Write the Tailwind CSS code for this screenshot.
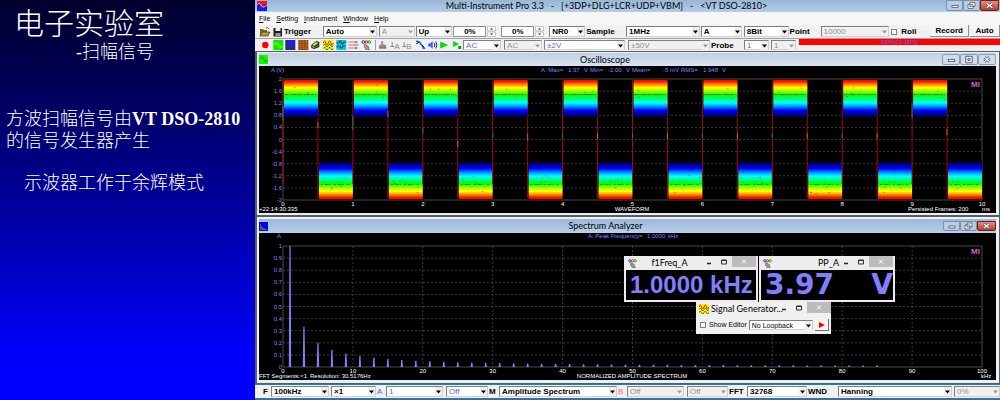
<!DOCTYPE html>
<html lang="zh-CN">
<head>
    <meta charset="UTF-8">
    <meta name="viewport" content="width=device-width, initial-scale=1.0">
    <title>电子实验室 - 扫幅信号</title>
    <script src="https://cdn.jsdelivr.net/npm/@tailwindcss/browser@4"></script>
</head>
<body class="flex min-h-screen overflow-x-hidden bg-[#0000f0] font-['Liberation_Sans',sans-serif] text-black">

    <!-- Slide text -->
    <aside class="w-[255px] shrink-0 bg-linear-to-b from-[#00002c] to-[#0000ff] to-90% font-['Liberation_Serif','Noto_Sans_CJK_SC',serif] text-lg font-light text-white">
        <h1 class="pt-2 pl-3.5 text-[30px] leading-8">电子实验室</h1>
        <p class="pl-[76px] leading-6">-扫幅信号</p>
        <p class="mt-11 pl-1.5 leading-[22px] whitespace-nowrap">方波扫幅信号由<b class="font-bold">VT DSO-2810</b><br>的信号发生器产生</p>
        <p class="mt-5 pl-6 leading-[22px]">示波器工作于余辉模式</p>
    </aside>

    <main class="relative flex min-w-0 flex-1 flex-col bg-[#f0f0f0]">
        <header class="flex h-3 items-center bg-linear-to-b from-[#9ab6d6] to-[#b4cde8]">
            <svg class="ml-0.5 h-2.5 w-2.5" viewBox="0 0 10 10"><path fill="#f01020" d="M0 0h10v10H0z"/><path fill="#1020f0" d="M0 2l2 1 2 3 2 1 2-3 2-1v7H0z"/><path d="M0 4q2-4 4 0t6 0" fill="none" stroke="#fff" stroke-width=".6"/></svg>
            <h2 class="flex-1 text-center font-['Lato',sans-serif] text-[9px] leading-3 whitespace-pre">Multi-Instrument Pro 3.3   -   [+3DP+DLG+LCR+UDP+VBM]   -   &lt;VT DSO-2810&gt;</h2>
            <div class="flex h-full pr-px pb-px" data-window-buttons="active"></div>
        </header>

        <nav class="flex h-[13px] items-center gap-1.5 bg-[#f6f6f6] pl-1 text-[7px] leading-3">
            <a href="#"><u>F</u>ile</a>
            <a href="#"><u>S</u>etting</a>
            <a href="#"><u>I</u>nstrument</a>
            <a href="#"><u>W</u>indow</a>
            <a href="#"><u>H</u>elp</a>
        </nav>

        <div id="triggerBar" class="flex h-[13px] text-[8px] font-bold"></div>
        <div id="inputBar" class="flex h-[13px] border-t border-[#a0a0a0] text-[8px]"></div>

        <div class="flex flex-col gap-0.5 bg-[#5c5c5c] pt-px pr-px pb-px pl-0.5">
            <section class="border-t border-r-3 border-b-2 border-l-2 border-[#e8eef5] bg-black">
                <div class="flex h-[13px] items-center bg-linear-to-b from-[#c2d0e0] to-[#d8e4f0]">
                    <svg class="h-[9px] w-[9px]" viewBox="0 0 9 9"><path fill="#00ff00" d="M0 0h9v9H0z"/><path d="M1 4q2-4 4 .5T8 5" fill="none" stroke="#806000"/></svg>
                    <h3 class="flex-1 text-center font-['Lato',sans-serif] text-[9px] leading-3">Oscilloscope</h3>
                    <div class="flex h-full py-px" data-window-buttons="inactive"></div>
                </div>
                <svg id="scope" class="block h-auto w-full" viewBox="0 0 737 147" font-size="6"></svg>
            </section>

            <section class="border-t-2 border-r-3 border-b-3 border-l-2 border-[#e8f2fa] border-b-[#e0f4f8] bg-black">
                <div class="flex h-[14px] items-center bg-linear-to-b from-[#9cb8d8] to-[#b8d0ea]">
                    <svg class="h-[9px] w-[9px]" viewBox="0 0 9 9"><path fill="#0000ff" d="M0 0h9v9H0z"/><path fill="#556" d="M1 8V2h1v2h1v1h1v1h2v1h2v1z"/></svg>
                    <h3 class="flex-1 text-center font-['Lato',sans-serif] text-[9px] leading-3">Spectrum Analyzer</h3>
                    <div class="flex h-full py-0.5" data-window-buttons="active"></div>
                </div>
                <svg id="spectrum" class="block h-auto w-full" viewBox="0 0 737 147" font-size="6"></svg>
            </section>
        </div>

        <div id="spectrumBar" class="flex h-[14px] border-t border-[#2080a0] text-[8px] font-bold"></div>
        <footer class="min-h-[3px] flex-1 bg-[#3a7098]"></footer>

        <!-- Floating windows -->
        <section class="absolute top-64 left-[369px] w-[134px] bg-[#ececec] px-0.5 pb-0.5">
            <div class="flex h-3.5 items-center pl-0.5">
                <span data-icon="ddp" class="h-[9px] w-[9px]"></span>
                <h4 class="flex-1 text-center font-['Lato',sans-serif] text-[9px] leading-3">f1Freq_A</h4>
                <div class="flex h-full" data-window-buttons="small"></div>
            </div>
            <output class="block bg-black pl-1 text-2xl leading-[30px] font-bold whitespace-nowrap text-[#8080ff]">1.0000 kHz</output>
        </section>
        <section class="absolute top-64 left-[504px] w-[136px] bg-[#ececec] px-0.5 pb-0.5">
            <div class="flex h-3.5 items-center pl-0.5">
                <span data-icon="ddp" class="h-[9px] w-[9px]"></span>
                <h4 class="flex-1 text-right font-['Lato',sans-serif] text-[9px] leading-3">PP_A</h4>
                <div class="flex h-full" data-window-buttons="small"></div>
            </div>
            <output class="flex justify-between bg-black pl-1 font-['DejaVu_Sans',sans-serif] text-[28px] leading-[30px] font-bold text-[#8080ff]"><span>3.97</span> <span>V</span></output>
        </section>
        <section class="absolute top-[302px] left-[441px] w-[135px] bg-[#f0f0f0]">
            <div class="flex h-3.5 items-center pl-[3px]">
                <span data-icon="gen" class="h-2.5 w-2.5 shrink-0"></span>
                <h4 class="min-w-0 flex-1 pl-0.5 font-['Lato',sans-serif] text-[9px] leading-3 whitespace-nowrap">Signal Generator...</h4>
                <div class="flex h-full" data-window-buttons="small"></div>
            </div>
            <div class="flex h-[18px] items-center gap-0.5 pr-0.5 pl-1 text-[7px]">
                <label class="flex items-center gap-[3px] whitespace-nowrap"><input type="checkbox" class="h-1.5 w-1.5 appearance-none border border-[#808080] bg-white"> Show Editor</label>
                <span id="loopback" class="flex h-3 flex-1"></span>
                <button aria-label="Start" class="flex h-3 w-3.5 items-center justify-center border-r border-b border-[#707070] bg-[#f4f4f4]"><svg class="h-1.5 w-1.5" viewBox="0 0 6 6"><path fill="#f00" d="M0 0l6 3-6 3z"/></svg></button>
            </div>
        </section>
    </main>

    <script>
        // Icons on a 10x10 grid
        const icons = {
            open: '<path d="M0 9V2h3l1 1h3v2H3z" fill="#807000"/><path d="M2 5h8L8 9H0z" fill="#b0a030" stroke="#222" stroke-width=".6"/><path d="M6 1q2-1 3 1" fill="none" stroke="#222" stroke-width=".7"/>',
            save: '<path d="M1 1h8.500v8.500H1z" fill="#222"/><path d="M3 1h5v3H3z" fill="#eee"/><path d="M3 6h5v3H3z" fill="#999"/>',
            rec: '<circle cx="5" cy="5" r="3.200" fill="#f00"/>',
            osc: '<path d="M0 0h10v10H0z" fill="#00f000"/><path d="M1 5q2-4 4 0t4 1" fill="none" stroke="#ff0"/>',
            spec: '<path d="M0 0h10v10H0z" fill="#2020e0"/><path d="M1 9V1h1v4h1v1h2v1h2v1h2v1z" fill="#334"/>',
            plot3d: '<path d="M0 0h10v10H0z" fill="#904010"/><path d="M0 2h10M0 5h10M0 8h10M2 0v10M5 0v10M8 0v10" stroke="#d08030" stroke-dasharray="1 1"/>',
            book: '<path d="M1 5l5-4 3 1v5L4 9 1 8z" fill="#222"/><path d="M2 5l4-3 2 1-4 3z" fill="#ee0"/><path d="M2 6l2 1v1L2 7z" fill="#fff"/><path d="M5 7l3-2v1L5 8z" fill="#0c0"/>',
            gen: '<path d="M0 0h10v10H0z" fill="#ff0"/><path d="M0 3q1.300-4 2.500 0t2.500 0 2.500 0 2.500 0" fill="none" stroke="#f00"/><path d="M0 5.500q1.300-3 2.500 0t2.500 0 2.500 0 2.500 0M0 8.500q1.300-3 2.500 0t2.500 0 2.500 0 2.500 0" fill="none" stroke="#060" stroke-width=".8"/>',
            cyan: '<path d="M0 0h10v10H0z" fill="#00d0e8"/><path d="M0 3h3V1h2v3h2V2h3M1 8V6h3v2h2V6h3" fill="none" stroke="#023" stroke-width=".8"/>',
            log: '<path d="M0 2h7M0 5h7M0 8h7" stroke="#f06090" stroke-width="1"/><path d="M7 1l3 1-3 1zM7 7l3 1-3 1z" fill="#e03"/><path d="M6 5h4" stroke="#20b020"/>',
            ddp: '<circle cx="2" cy="2" r="1.300" fill="none" stroke="#22f"/><circle cx="5" cy="2" r="1.300" fill="none" stroke="#f00"/><circle cx="8" cy="2" r="1.300" fill="none" stroke="#0a0"/><path d="M3 4l4 2 1 4H5L3 7z" fill="#999" stroke="#444" stroke-width=".5"/>',
            hand: '<path d="M4 1h2v3l3 1v4H2V5l2-1z" fill="#999"/><path d="M2 7h7" stroke="#666"/>',
            perpA: '<path d="M2 2v4M0 6.500h4" stroke="#888" fill="none"/><text x="4" y="9" font-size="8" fill="#888">A</text>',
            perpB: '<path d="M2 2v4M0 6.500h4" stroke="#888" fill="none"/><text x="4" y="9" font-size="8" fill="#888">B</text>',
            probe: '<path d="M1 1l3 1 4 5v2" fill="none" stroke="#06e" stroke-width="1.500"/><path d="M1 4l3-2M7 5l3 4" stroke="#024"/>',
            speaker: '<path d="M1 3.500h2l2.500-2.500v8L3 6.500H1z" fill="#36f"/><path d="M7 3q1.500 2 0 4M8.500 1.500q2.500 3.500 0 7" fill="none" stroke="#22a"/>',
            play: '<path d="M1 1.500l8 3.500-8 3.500z" fill="#0d0"/>',
            play2: '<path d="M1 1l6 3-6 3z" fill="#0d0"/><path d="M6 6h3v3H6z" fill="#0a0"/>'
        };
        const icon = name => `<svg class="h-full w-full" viewBox="0 0 10 10">${icons[name]}</svg>`;

        // Every item of a bar carries a weight, so the bars stretch with the window
        const combo = (w, name, value, look = '') => `
            <span class="relative my-px flex min-w-0 bg-white" style="flex:${w} 1 0px">
                <select aria-label="${name}" class="w-full min-w-0 appearance-none truncate border border-t-[#808080] border-l-[#808080] border-[#d0d0d0] pl-0.5 leading-[9px] ${look}"><option>${value}</option></select>
                <svg class="pointer-events-none absolute top-px right-px bottom-px w-[7px] bg-[#f0f0f0]" height="9" viewBox="0 0 7 9"><path d="M1 3.500h5L3.500 6.500z" fill="${look.includes('#909090') ? '#999' : '#000'}"/></svg>
            </span>`;
        const gray = 'bg-[#f0f0f0] text-[#909090] font-normal';
        const blue = 'text-[#6060ff] font-normal';
        const gap = w => `<span style="flex:${w} 1 0px"></span>`;
        const label = (w, text, look = 'font-bold') => `<span class="my-px min-w-0 overflow-hidden indent-px leading-[11px] whitespace-nowrap ${look}" style="flex:${w} 1 0px">${text}</span>`;
        const tool = (w, name) => `<button aria-label="${name}" class="flex min-w-0 items-center" style="flex:${w} 1 0px"><svg class="h-2.5 w-full" viewBox="0 0 10 10">${icons[name]}</svg></button>`;
        const button = (w, text) => `<button class="mb-px border-r border-b border-[#909090] bg-[#f4f4f4] leading-[11px]" style="flex:${w} 1 0px">${text}</button>`;
        const percent = (w, name) => `
            <span class="my-px flex min-w-0" style="flex:${w} 1 0px">
                <input aria-label="${name}" value="0%" class="w-full min-w-0 border border-[#909090] bg-white text-center leading-[9px]">
                <svg class="h-full w-2.5 shrink-0 pl-px" viewBox="0 0 9 11"><path d="M.500.500h8v4.500h-8zM.500 6h8v4.500h-8z" fill="#f8f8f8" stroke="#aaa" stroke-width=".6"/><path d="M3 3.500h3L4.500 2zM3 7.500h3L4.500 9z" fill="#222"/></svg>
            </span>`;

        document.getElementById('triggerBar').innerHTML = gap(4) + tool(12, 'open') + gap(1) + tool(11, 'save') + label(40, 'Trigger')
            + combo(54, 'Trigger mode', 'Auto') + gap(2) + combo(36, 'Trigger source', 'A', gray) + gap(1) + combo(37, 'Trigger edge', 'Up') + gap(1)
            + percent(43, 'Trigger level') + gap(5) + percent(43, 'Trigger delay') + gap(5) + combo(36, 'Noise rejection', 'NR0') + label(41, 'Sample')
            + combo(74, 'Sampling rate', '1MHz') + gap(1) + combo(41, 'Channels', 'A') + gap(2) + combo(45, 'Resolution', '8Bit') + label(32, 'Point')
            + combo(69, 'Points', '10000', gray) + gap(2)
            + `<label class="flex items-center gap-1" style="flex:39 1 0px"><input type="checkbox" class="h-1.5 w-1.5 appearance-none border border-[#808080] bg-white">Roll</label>`
            + button(38, 'Record') + gap(1) + button(29, 'Auto');

        document.getElementById('inputBar').innerHTML = gap(4)
            + ['rec', 'osc', 'spec', 'plot3d', 'book', 'gen', 'cyan', 'log', 'ddp'].map(n => tool(12.6, n)).join('')
            + gap(3) + '<span class="my-px w-px bg-[#a0a0a0]"></span>'
            + ['hand', 'perpA', 'perpB', 'probe', 'speaker', 'play', 'play2'].map(n => tool(12.4, n)).join('')
            + combo(38, 'Coupling A', 'AC', blue) + gap(3) + combo(38, 'Coupling B', 'AC', gray) + gap(2)
            + combo(81, 'Range A', '±2V', blue) + gap(3) + combo(82, 'Range B', '±50V', gray) + label(34, 'Probe')
            + combo(25, 'Probe A', '1', blue) + gap(2) + combo(25, 'Probe B', '1', gray) + gap(3)
            + '<span class="h-[6px] bg-[#ff0000] text-center text-[5px] leading-[6px] text-[#8060e0]" style="flex:201 1 0px">100%(0.0 dBFS)</span>';

        document.getElementById('spectrumBar').innerHTML = gap(7) + label(9, 'F')
            + combo(58, 'Frequency range', '100kHz') + gap(2) + combo(45, 'Zoom', '×1') + label(10, 'A', blue)
            + combo(57, 'Scale A', '1', blue) + gap(3) + combo(42, 'Offset A', 'Off', blue) + label(11, 'M')
            + combo(118, 'Mode', 'Amplitude Spectrum') + label(10, 'B', 'text-[#ff7070] font-normal')
            + combo(57, 'Scale B', 'Off', gray) + gap(3) + combo(41, 'Offset B', 'Off', gray) + label(19, 'FFT')
            + combo(60, 'FFT size', '32768') + label(31, 'WND') + combo(114, 'Window function', 'Hanning') + gap(2) + combo(46, 'Overlap', '0%', gray);

        document.getElementById('loopback').innerHTML = combo(1, 'Loopback', 'No Loopback');
        document.querySelectorAll('[data-icon]').forEach(el => el.innerHTML = icon(el.dataset.icon));

        const windowButtons = {
            active: `
                <button aria-label="Minimize" class="w-[17px] rounded-b-xs border border-[#7890b0] bg-[#b8cce4]"><svg class="h-full w-full" viewBox="0 0 15 8"><rect x="5" y="4" width="6" height="2" fill="#fff" stroke="#445" stroke-width=".7"/></svg></button>
                <button aria-label="Restore" class="w-[17px] rounded-b-xs border border-[#7890b0] bg-[#b8cce4]"><svg class="h-full w-full" viewBox="0 0 15 8"><path d="M6 1h5v4H6zM4 3h5v4H4z" fill="#fff" stroke="#445" stroke-width=".7"/></svg></button>
                <button aria-label="Close" class="w-[19px] rounded-b-xs border border-[#702018] bg-linear-to-b from-[#e09080] to-[#c03820]"><svg class="h-full w-full" viewBox="0 0 15 8"><path d="M5 2l5 4M10 2l-5 4" stroke="#445" stroke-width="2.400"/><path d="M5 2l5 4M10 2l-5 4" stroke="#fff" stroke-width="1.400"/></svg></button>`,
            inactive: `
                <button aria-label="Minimize" class="w-[18px] rounded-xs border border-[#8c9cb0] bg-[#d0dcea]"><svg class="h-full w-full" viewBox="0 0 15 8"><rect x="5" y="4" width="6" height="2" fill="#fff" stroke="#445" stroke-width=".7"/></svg></button>
                <button aria-label="Maximize" class="w-[18px] rounded-xs border border-[#8c9cb0] bg-[#d0dcea]"><svg class="h-full w-full" viewBox="0 0 15 8"><path d="M4.500 1h6v6h-6zM6.500 3h2v2h-2z" fill="#fff" stroke="#445" stroke-width=".8"/></svg></button>
                <button aria-label="Close" class="w-[18px] rounded-xs border border-[#8c9cb0] bg-[#d0dcea]"><svg class="h-full w-full" viewBox="0 0 15 8"><path d="M5 2l5 4M10 2l-5 4" stroke="#445" stroke-width="2.400"/><path d="M5 2l5 4M10 2l-5 4" stroke="#fff" stroke-width="1.200"/></svg></button>`,
            small: `
                <button aria-label="Minimize" class="w-3.5"><svg class="h-full w-full" viewBox="0 0 14 14"><path d="M5 7.500h4" stroke="#222" stroke-width="1.500"/></svg></button>
                <button aria-label="Maximize" class="w-4"><svg class="h-full w-full" viewBox="0 0 14 14"><path d="M4.500 4h5v4h-5zM4 4.500h6" fill="none" stroke="#333"/></svg></button>
                <button aria-label="Close" class="mb-[3px] w-6 bg-[#bcbcbc]"><svg class="h-full w-full" viewBox="0 0 14 11"><path d="M5 3.500l4 4M9 3.500l-4 4" stroke="#fff"/></svg></button>`
        };
        document.querySelectorAll('[data-window-buttons]').forEach(el => el.innerHTML = windowButtons[el.dataset.windowButtons]);

        // Plot area shared by both graphs
        const left = 24, right = 723, top_ = 13, bottom = 134;
        const step = (right - left) / 10;
        const rowH = (bottom - top_) / 10;
        const text = (x, y, s, fill = '#fff', anchor = 'start') => `<text x="${x}" y="${y}" fill="${fill}" text-anchor="${anchor}">${s}</text>`;
        const violet = '#8080ff';

        function axes(yLabels, xLabels, verticals) {
            let out = '';
            for (let i = 0; i <= 10; i++) {
                const y = top_ + i * rowH;
                const x = left + i * step;
                if (i > 0 && i < 10) {
                    out += `<path d="M${left} ${y}H${right}" stroke="#4a4a4a" stroke-width=".8" stroke-dasharray="2 2"/>`;
                    if (verticals) out += `<path d="M${x} ${top_}V${bottom}" stroke="#4a4a4a" stroke-width=".8" stroke-dasharray="2 2"/>`;
                }
                out += text(left - 1, y + 2, yLabels[i], violet, 'end');
                out += text(x, bottom + 6, xLabels[i], '#fff', 'middle');
            }
            return out + `<path d="M${left} ${top_}H${right}V${bottom}H${left}z" fill="none" stroke="#484848"/>`
                + '<text x="712" y="21" font-size="8" font-weight="bold" fill="#d060c0">MI</text>';
        }

        let seed = 7;
        const rand = () => (seed = (seed * 16807) % 2147483647) / 2147483647;

        function drawScope() {
            const stops = [[0, '#ff0000'], [.04, '#ff1000'], [.1, '#ff7000'], [.2, '#ffff00'], [.27, '#c0ff00'], [.4, '#00ff00'], [.5, '#00ff80'], [.6, '#00ffff'], [.7, '#0090ff'], [.8, '#0000ff'], [.92, '#000080'], [1, '#000000']]
                .map(([o, c]) => `<stop offset="${o}" stop-color="${c}"/>`).join('');
            let out = `<defs>
                <linearGradient id="high" x1="0" y1="0" x2="0" y2="1">${stops}</linearGradient>
                <linearGradient id="low" x1="0" y1="1" x2="0" y2="0">${stops}</linearGradient>
            </defs>`;
            out += axes(['2', '1.6', '1.2', '0.8', '0.4', '0', '-0.4', '-0.8', '-1.2', '-1.6', '-2'], [0, 1, 2, 3, 4, 5, 6, 7, 8, 9, 10], false);
            for (let i = 0; i < 10; i++) {
                const x = left + i * step;
                const half = step / 2;
                out += `<path d="M${x} 118V15M${x + half} 16V132" stroke="#a80808"/>`;
                out += `<rect x="${x + 1}" y="14" width="${half - 1}" height="38" fill="url(#high)"/>`;
                out += `<rect x="${x + half + 1}" y="95" width="${half - 1}" height="38" fill="url(#low)"/>`;
                out += `<path d="M${x + 2} 28.500h${half - 4}" stroke="#064000" stroke-width=".8" stroke-dasharray="3 1 1 1 6 1" opacity=".75"/>`;
                out += `<path d="M${x + half + 3} 118.500h${half - 6}" stroke="#064000" stroke-width=".8" stroke-dasharray="2 2 4 1 1 3" opacity=".75"/>`;
                out += `<path d="M${x + half + 5} 115.500h${half - 12}" stroke="#064000" stroke-width=".6" stroke-dasharray="2 5 1 4" opacity=".7"/>`;
                for (let k = 0; k < 8; k++) {
                    const dx = 3 + rand() * (half - 6);
                    const y = k < 3 ? 18 + rand() * 16 : 106 + rand() * 22;
                    out += `<rect x="${x + dx + (k < 3 ? 0 : half)}" y="${y}" width="1" height=".7" fill="#403000"/>`;
                }
                const gy = [40, 50, 62, 67, 67, 67, 67, 67, 67, 38][i];
                out += `<path d="M${x} ${gy}v${i < 2 || i > 8 ? 14 : 5}" stroke="#208050"/>`;
                out += `<path d="M${x + half} ${[56, 45, 75, 68, 67, 67, 67, 67, 67, 63][i]}v6" stroke="#b07020"/>`;
            }
            out += text(12, 6, 'A (V)', violet);
            [[282, 'A: Max='], [309, '1.97'], [325, 'V'], [331, 'Min='], [349, '-2.00'], [367, 'V'], [373, 'Mean='], [404, '-5'], [411, 'mV'], [422, 'RMS='], [444, '1.948'], [463, 'V']]
                .forEach(([x, s]) => out += text(x, 6, s, violet));
            out += text(0, 145, '+22:14:30:335') + text(373, 145, 'WAVEFORM', '#fff', 'middle');
            out += text(649, 145, 'Persisted Frames: 200') + text(723, 145, 'ms');
            document.getElementById('scope').innerHTML = out;
        }

        function drawSpectrum() {
            let out = axes(['1', '0.9', '0.8', '0.7', '0.6', '0.5', '0.4', '0.3', '0.2', '0.1', '0'], [0, 10, 20, 30, 40, 50, 60, 70, 80, 90, 100], true);
            // Square wave: odd harmonics falling off as 1/n
            for (let n = 1; n < 87; n += 2) {
                const x = left + n * step / 10;
                const h = Math.max((bottom - top_) / n, .6);
                out += `<path d="M${x - 1.2} ${bottom}L${x - .6} ${bottom - h}h1.200L${x + 1.2} ${bottom}z" fill="${violet}"/>`;
            }
            out += text(18, 5, 'A', violet) + text(329, 5, 'A: Peak Frequency=', violet) + text(388, 5, '1.0000', violet) + text(409, 5, 'kHz', violet);
            out += text(0, 145, 'FFT Segments:&lt;1') + text(51, 145, 'Resolution: 30.5176Hz');
            out += text(373, 145, 'NORMALIZED AMPLITUDE SPECTRUM', '#fff', 'middle') + text(722, 145, 'kHz');
            document.getElementById('spectrum').innerHTML = out;
        }

        drawScope();
        drawSpectrum();
    </script>
</body>
</html>
